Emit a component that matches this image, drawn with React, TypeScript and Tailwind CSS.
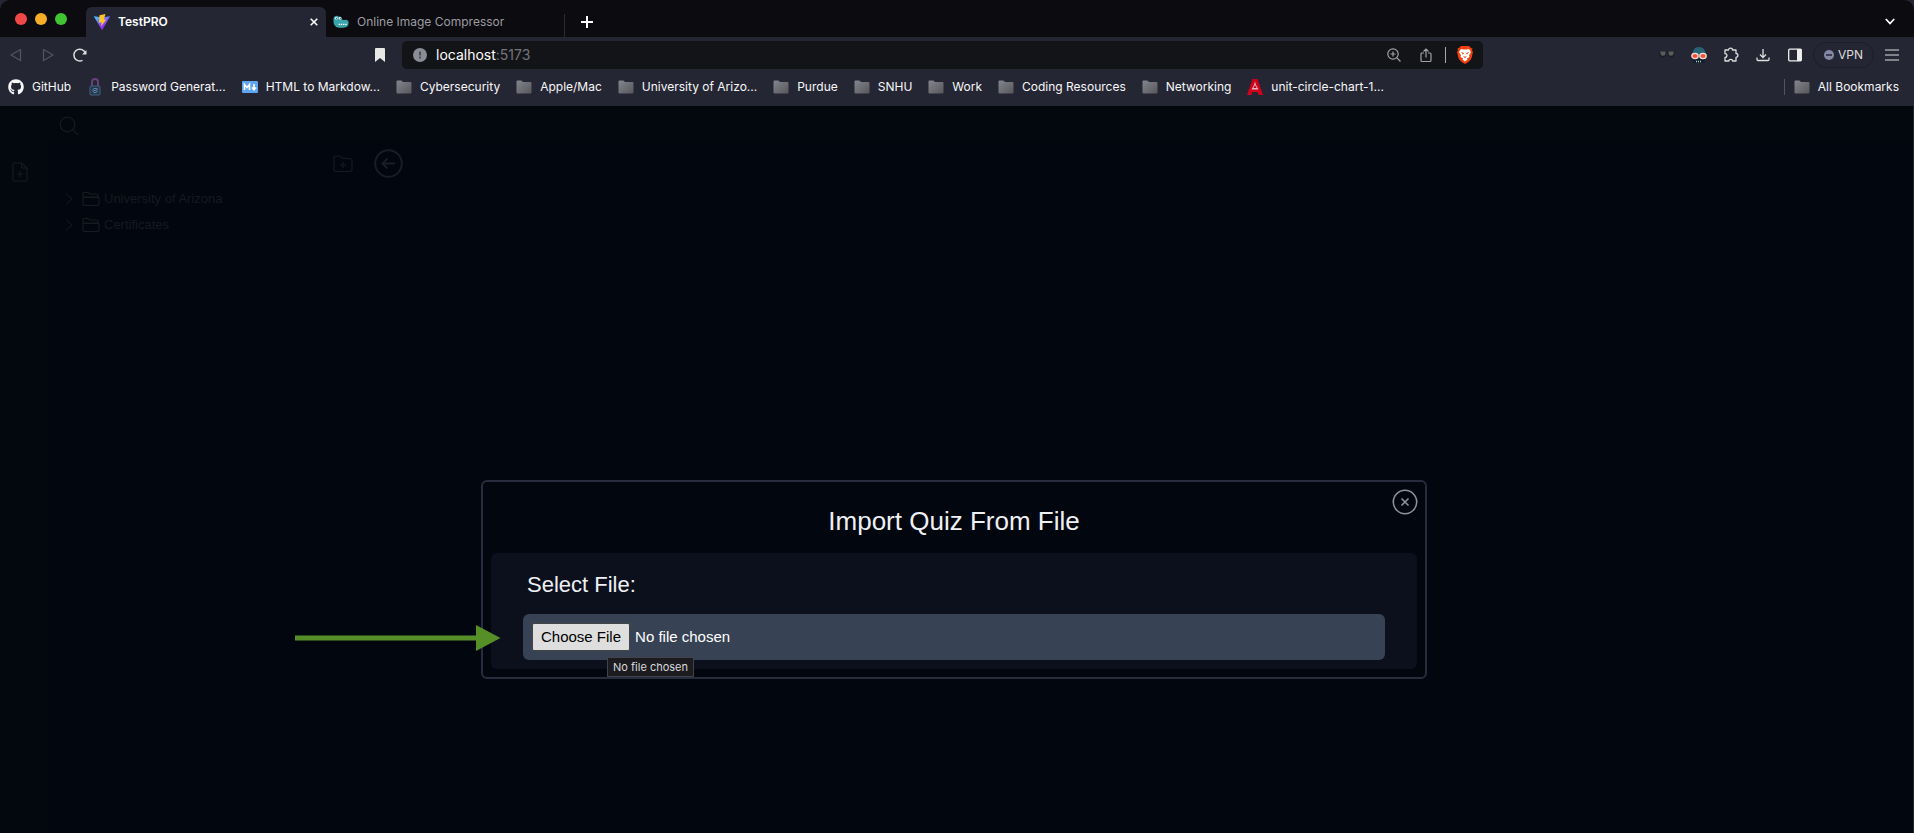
import React from "react";
import { FaGithub } from "react-icons/fa";

type Bookmark = { label: string; icon: React.ReactNode };

function FolderGlyph() {
  return (
    <svg width="16" height="14" viewBox="0 0 16 14" className="shrink-0" aria-hidden="true">
      <defs>
        <linearGradient id="folder" x1="0" y1="0" x2="1" y2="1">
          <stop offset="0" stopColor="#85868e" />
          <stop offset="1" stopColor="#56565b" />
        </linearGradient>
      </defs>
      <path d="M.5 1.500Q.5 .5 1.500 .5H5Q6 .5 6.500 1.500L7 2H14.500Q15.500 2 15.500 3V12.500Q15.500 13.500 14.500 13.500H1.500Q.5 13.500 .5 12.500Z" fill="url(#folder)" />
    </svg>
  );
}

function ViteLogo() {
  return (
    <svg width="16" height="16" viewBox="0 0 16 16" className="shrink-0" aria-hidden="true">
      <defs>
        <linearGradient id="vite" x1="0" y1="0" x2=".5" y2=".8">
          <stop offset="0" stopColor="#41d1ff" />
          <stop offset="1" stopColor="#9a2cf5" />
        </linearGradient>
      </defs>
      <path d="M.3 2.200L8 3.500L15.700 2.200Q16 2.500 15.700 3L8.500 15.600Q8 16 7.600 15.600L.2 3Q0 2.400 .3 2.200Z" fill="url(#vite)" />
      <path d="M11.500 0L5.500 1.200L5 8.500H7.700L7 12.500L12.200 5.500H9.800Z" fill="#ffc526" />
    </svg>
  );
}

function CrocLogo() {
  return (
    <svg width="16" height="14" viewBox="0 0 17 14" className="shrink-0" aria-hidden="true">
      <path d="M.5 5Q0 1 3 .5Q5.500 0 6 1.500Q9 0 9.500 4Q11 5.500 14 4.500Q17 5 16.500 8.500Q16.500 12.500 11 13H6Q0 12.500 .5 5Z" fill="#38a4ab" />
      <circle cx="3.500" cy="3" r="1.300" fill="#fff" /><circle cx="7.500" cy="3" r="1.300" fill="#fff" />
      <circle cx="3.700" cy="3" r=".6" fill="#111" /><circle cx="7.700" cy="3" r=".6" fill="#111" />
      <path d="M6 9.500H15" stroke="#fff" strokeWidth="1.500" strokeDasharray="1.500 .8" />
    </svg>
  );
}

function LockLogo() {
  return (
    <svg width="14" height="18" viewBox="0 0 14 18" className="shrink-0" fill="none" aria-hidden="true">
      <path d="M4 8V4Q4 1 7 1Q10 1 10 4V8" stroke="#67407c" strokeWidth="2" />
      <rect x="2" y="8" width="10" height="9" rx="1" fill="#263650" stroke="#41637b" />
      <circle cx="7" cy="12.500" r="2.200" stroke="#4c95a2" />
      <path d="M6 12L7 13L9.500 10" stroke="#8b6eb0" />
    </svg>
  );
}

function MarkdownLogo() {
  return (
    <svg width="16" height="12" viewBox="0 0 16 12" className="shrink-0" aria-hidden="true">
      <rect width="16" height="12" rx="1" fill="#60a5f2" />
      <path d="M2.500 9V3.500L5 6.500L7.500 3.500V9M12 3V8M10 6.500L12 8.800L14 6.500" fill="none" stroke="#fff" strokeWidth="1.600" />
    </svg>
  );
}

function AcademyLogo() {
  return (
    <svg width="16" height="16" viewBox="0 0 16 16" className="shrink-0" aria-hidden="true">
      <path d="M5.500 0H10.500L16 16H11.500L10.700 13H5.300L4.500 16H0Z" fill="#d0021b" />
      <path d="M8 2.500L9 6L11.500 10.500H4.500L7 6Z" fill="#e9b5bb" />
      <path d="M6.300 9L8 6L9.700 9Z" fill="#b00a20" />
    </svg>
  );
}

const bookmarks: Bookmark[] = [
  { label: "GitHub", icon: <FaGithub size={16} className="shrink-0" /> },
  { label: "Password Generat...", icon: <span className="flex w-4 justify-center"><LockLogo /></span> },
  { label: "HTML to Markdow...", icon: <MarkdownLogo /> },
  { label: "Cybersecurity", icon: <FolderGlyph /> },
  { label: "Apple/Mac", icon: <FolderGlyph /> },
  { label: "University of Arizo...", icon: <FolderGlyph /> },
  { label: "Purdue", icon: <FolderGlyph /> },
  { label: "SNHU", icon: <FolderGlyph /> },
  { label: "Work", icon: <FolderGlyph /> },
  { label: "Coding Resources", icon: <FolderGlyph /> },
  { label: "Networking", icon: <FolderGlyph /> },
  { label: "unit-circle-chart-1...", icon: <AcademyLogo /> },
];

function TabStrip() {
  return (
    <div className="flex h-[37px] items-end rounded-t-[10px] bg-[#0b0b10] pr-4">
      <div className="flex w-[86px] shrink-0 gap-2 self-center pl-[15px]">
        <button aria-label="Close window" className="size-3 rounded-full bg-[#f04747]" />
        <button aria-label="Minimize window" className="size-3 rounded-full bg-[#f5ae26]" />
        <button aria-label="Zoom window" className="size-3 rounded-full bg-[#41c334]" />
      </div>
      <div className="flex h-[30px] w-60 items-center gap-2 rounded-t-md bg-[#252633] px-2">
        <ViteLogo />
        <span className="flex-1 text-xs font-semibold text-white">TestPRO</span>
        <button aria-label="Close tab" className="text-white">
          <svg width="8" height="8" viewBox="0 0 8 8" stroke="currentColor" strokeWidth="1.600"><path d="M.7.7L7.300 7.300M7.300.7L.7 7.300" /></svg>
        </button>
      </div>
      <div className="flex h-[30px] w-[238px] items-center gap-2 px-[7px]">
        <CrocLogo />
        <span className="text-xs text-[#9d9da1]">Online Image Compressor</span>
      </div>
      <div className="h-[23px] w-px bg-[#2c2c30]" />
      <button aria-label="New tab" className="mb-[9px] ml-4 text-white">
        <svg width="12" height="12" viewBox="0 0 12 12" stroke="currentColor" strokeWidth="2"><path d="M6 0V12M0 6H12" /></svg>
      </button>
      <button aria-label="Search tabs" className="mb-3 ml-auto mr-[3px] text-white">
        <svg width="10" height="7" viewBox="0 0 10 7" fill="none" stroke="currentColor" strokeWidth="1.800"><path d="M.8 1L5 5.500L9.200 1" /></svg>
      </button>
    </div>
  );
}

function Toolbar() {
  return (
    <div className="flex h-9 items-center text-[#dededf]">
      <div className="flex w-[402px] shrink-0 items-center pl-[10px]">
        <button aria-label="Back" className="text-[#53545f]">
          <svg width="12" height="14" viewBox="0 0 12 14" fill="none" stroke="currentColor" strokeWidth="1.300" strokeLinejoin="round"><path d="M10.500 1.500V12.500L1 7Z" /></svg>
        </button>
        <button aria-label="Forward" className="ml-5 text-[#53545f]">
          <svg width="12" height="14" viewBox="0 0 12 14" fill="none" stroke="currentColor" strokeWidth="1.300" strokeLinejoin="round"><path d="M1.500 1.500V12.500L11 7Z" /></svg>
        </button>
        <button aria-label="Reload" className="ml-[18px]">
          <svg width="16" height="16" viewBox="0 0 16 16" fill="none" stroke="currentColor" strokeWidth="1.500"><path d="M10.500 13.300A5.900 5.900 0 1 1 13.300 6" /><path d="M14.500 3V7.500H10Z" fill="currentColor" stroke="none" /></svg>
        </button>
        <button aria-label="Bookmark this tab" className="ml-auto mr-[17px]">
          <svg width="10" height="14" viewBox="0 0 10 14" fill="#e8e8e6"><path d="M0 1Q0 0 1 0H9Q10 0 10 1V14L5 10L0 14Z" /></svg>
        </button>
      </div>
      <div className="flex h-7 min-w-0 flex-1 items-center rounded-[5px] bg-[#131418] pl-[11px] pr-[10px]">
        <svg width="14" height="14" viewBox="0 0 14 14" className="mr-[9px]" aria-hidden="true"><circle cx="7" cy="7" r="7" fill="#8a8d95" /><path d="M6 3.500H8V7.500H6ZM6 8.500H8V10.500H6Z" fill="#4b4e55" /></svg>
        <span className="flex-1 text-sm text-white">localhost<span className="text-[#73747a]">:5173</span></span>
        <button aria-label="Zoom" className="text-[#a0a1a5]">
          <svg width="14" height="14" viewBox="0 0 14 14" fill="none" stroke="currentColor" strokeWidth="1.200"><circle cx="6" cy="6" r="5.200" /><path d="M10 10L13.500 13.500M6 3.500V8.500M3.500 6H8.500" /></svg>
        </button>
        <button aria-label="Share" className="ml-[19px] text-[#a0a1a5]">
          <svg width="12" height="15" viewBox="0 0 12 15" fill="none" stroke="currentColor" strokeWidth="1.200"><path d="M4 5H2Q1 5 1 6V12.500Q1 13.500 2 13.500H10Q11 13.500 11 12.500V6Q11 5 10 5H8M6 9.500V1M3.500 3.500L6 1L8.500 3.500" /></svg>
        </button>
        <div className="ml-[13px] mr-[11px] h-4 w-px bg-[#a8a8aa]" />
        <button aria-label="Brave Shields">
          <svg width="16" height="18" viewBox="0 0 16 18"><path d="M4 0H12L14 2L15.500 2.500L15 4.500L16 6L14.500 12Q13.500 15 8 18Q2.500 15 1.500 12L0 6L1 4.500L.5 2.500L2 2Z" fill="#f4400e" /><path d="M4 3L6.500 3.500H9.500L12 3L14 6L12 9.500L12.500 11L10 12.500L10.500 13.500L8 15.500L5.500 13.500L6 12.500L3.500 11L4 9.500L2 6Z" fill="#fff" /><path d="M4 6L7 7L6 8.500ZM12 6L9 7L10 8.500ZM6 10.500H10L8 12Z" fill="#f4400e" /></svg>
        </button>
      </div>
      <div className="flex w-[431px] shrink-0 items-center justify-end gap-4 pr-[15px]">
        <button aria-label="Privacy glasses">
          <svg width="16" height="16" viewBox="0 0 16 16"><path d="M0 4H7L8 5L9 4H16L15 9Q12 12 9.500 9L9 6H7L6.500 9Q4 12 1 9Z" fill="#1b1c22" /><path d="M1 4.500H6.800L6 8Q4 9.500 2 8ZM9.200 4.500H15L14 8Q12 9.500 10 8Z" fill="#5c5c5c" /></svg>
        </button>
        <button aria-label="Robot extension">
          <svg width="16" height="16" viewBox="0 0 16 16"><path d="M1.500 8Q1.500 0 8 0Q14.500 0 14.500 8Z" fill="#286374" /><path d="M2 9H14V16H2Z" fill="#12202a" /><path d="M5 14.500H11" stroke="#b9cbd0" strokeWidth="1.500" strokeDasharray="1 1" /><ellipse cx="4" cy="9" rx="3.200" ry="2.600" fill="#ef5234" stroke="#f3dedb" strokeWidth="1.300" /><ellipse cx="12" cy="9" rx="3.200" ry="2.600" fill="#ef5234" stroke="#f3dedb" strokeWidth="1.300" /></svg>
        </button>
        <button aria-label="Extensions">
          <svg width="16" height="16" viewBox="0 0 16 16" fill="none" stroke="currentColor" strokeWidth="1.300" strokeLinejoin="round"><path d="M2 3H5.500A2 1.800 0 0 1 9.500 3H13V6.500A1.800 1.800 0 0 1 13 10.300V14H9.600A1.900 1.700 0 0 0 5.800 14H2V10.500A1.900 1.900 0 0 0 2 6.700Z" /></svg>
        </button>
        <button aria-label="Downloads">
          <svg width="16" height="16" viewBox="0 0 16 16" fill="none" stroke="currentColor" strokeWidth="1.300"><path d="M8 2V10M5 7.500L8 10.500L11 7.500M2 10.500V12.500Q2 13.500 3 13.500H13Q14 13.500 14 12.500V10.500" /></svg>
        </button>
        <button aria-label="Sidebar">
          <svg width="16" height="16" viewBox="0 0 16 16" fill="none" stroke="#eeeeec" strokeWidth="1.300"><rect x="1.700" y="2.200" width="12.600" height="11.600" rx="1" /><path d="M10 2H14.500V14H10Z" fill="#eeeeec" stroke="none" /></svg>
        </button>
        <button className="-ml-[6px] flex h-[26px] items-center gap-1 rounded-full border border-[#1c1d27] px-[10px] text-xs">
          <svg width="10" height="10" viewBox="0 0 10 10" aria-hidden="true"><circle cx="5" cy="5" r="5" fill="#8588a5" /><path d="M2 5H8" stroke="#252633" strokeWidth="1.500" /></svg>
          VPN
        </button>
        <button aria-label="Menu" className="-ml-[5px]">
          <svg width="14" height="12" viewBox="0 0 14 12" stroke="currentColor" strokeWidth="1.200"><path d="M0 1H14M0 6H14M0 11H14" /></svg>
        </button>
      </div>
    </div>
  );
}

function BookmarksBar() {
  return (
    <nav aria-label="Bookmarks" className="flex h-[33px] items-center gap-4 whitespace-nowrap pb-[6px] pl-2 pr-[15px] text-xs text-[#f8f8f9]">
      {bookmarks.map((b) => (
        <a key={b.label} href="#" className="flex items-center gap-2">
          {b.icon}
          {b.label}
        </a>
      ))}
      <div className="ml-auto flex items-center gap-[9px]">
        <div className="h-4 w-px bg-[#54555e]" />
        <a href="#" className="flex items-center gap-2"><FolderGlyph />All Bookmarks</a>
      </div>
    </nav>
  );
}

function TreeItem({ label }: { label: string }) {
  return (
    <li>
      <button className="flex h-[26px] items-center text-[13px]">
        <svg width="8" height="12" viewBox="0 0 8 12" fill="none" stroke="currentColor"><path d="M1 .5L7 6L1 11.500" /></svg>
        <svg width="18" height="16" viewBox="0 0 18 16" className="ml-[9px] mr-1" fill="none" stroke="currentColor" strokeWidth="1.200"><path d="M1 6V2.500Q1 1.500 2.500 1.500H6L8 3H14.500Q16 3 16 4.500V6M1 7V12.500Q1 14.500 3 14.500H15Q17 14.500 17 12.500V7Q17 6 16 6H2Q1 6 1 7ZM1 6.500H17" /></svg>
        {label}
      </button>
    </li>
  );
}

function ImportDialog() {
  return (
    <div role="dialog" aria-labelledby="dialog-title" className="relative w-[946px] max-w-full rounded-md border-2 border-[#272d3e] bg-[#02060f] p-2">
      <button aria-label="Close" className="absolute right-[7px] top-[7px] text-[#8d929f]">
        <svg width="26" height="26" viewBox="0 0 26 26" fill="none" stroke="currentColor" strokeWidth="1.600"><circle cx="13" cy="13" r="11.700" /><path d="M9.500 9.500L16.500 16.500M16.500 9.500L9.500 16.500" /></svg>
      </button>
      <h1 id="dialog-title" className="flex h-[63px] items-center justify-center text-[26px] text-[#eef0f4]">Import Quiz From File</h1>
      <div className="rounded-md bg-[#0c0f1c] px-8 pb-[9px] pt-3">
        <label htmlFor="quiz-file" className="ml-1 flex h-[38px] items-center text-[22px] text-[#eef0f4]">Select File:</label>
        <input
          id="quiz-file"
          type="file"
          className="mt-[11px] block h-[46px] w-full rounded-md bg-[#374254] p-[9px] text-[15px] text-white file:mr-[5px] file:h-7 file:rounded-[2px] file:border file:border-solid file:border-[#444] file:bg-[#dedede] file:px-2 file:text-[15px] file:text-black"
        />
      </div>
      <div role="tooltip" className="absolute left-[124px] top-[175px] flex h-5 items-center border border-[#424247] bg-[#1c1b20] px-[5px] font-[Inter,sans-serif] text-[11px] text-[#d9d9dc]">No file chosen</div>
      <svg width="206" height="26" viewBox="0 0 206 26" className="absolute -left-[188px] top-[143px]" aria-hidden="true"><path d="M0 10.500H181V0L205.500 13L181 26V15.500H0Z" fill="#568f28" /></svg>
    </div>
  );
}

export default function App() {
  return (
    <div className="flex min-h-screen flex-col bg-[#03080f] font-['Liberation_Sans',sans-serif]">
      <header className="bg-[#252633] font-[Inter,sans-serif]">
        <TabStrip />
        <Toolbar />
        <BookmarksBar />
      </header>
      <main className="relative flex flex-1 flex-col border-r border-[#23262c] text-[#161a21]">
        <div className="absolute inset-0 flex">
          <aside className="w-[47px] pl-3 pt-14">
            <button aria-label="New file">
              <svg width="16" height="20" viewBox="0 0 16 20" fill="none" stroke="currentColor" strokeWidth="1.200"><path d="M1 2.500Q1 1 2.500 1H9.500L15 6V17.500Q15 19 13.500 19H2.500Q1 19 1 17.500ZM9.500 1V5Q9.500 6 10.500 6H15M8 9V15M5 12H11" /></svg>
            </button>
          </aside>
          <div className="flex flex-1 flex-col">
            <div className="flex h-[35px] items-center pl-3 pt-1">
              <button aria-label="Search">
                <svg width="20" height="20" viewBox="0 0 20 20" fill="none" stroke="currentColor" strokeWidth="1.200"><circle cx="8.500" cy="8.500" r="7.300" /><path d="M13.700 13.700L19 19" /></svg>
              </button>
            </div>
            <div className="flex-1 bg-[#02060f]">
              <div className="flex h-[45px] w-[356px] items-center justify-end gap-[21px]">
                <button aria-label="New folder">
                  <svg width="20" height="18" viewBox="0 0 20 18" fill="none" stroke="currentColor" strokeWidth="1.200"><path d="M1 3Q1 1 3 1H7L9.500 3.500H17Q19 3.500 19 5.500V14.500Q19 16.500 17 16.500H3Q1 16.500 1 14.500ZM10 7V13M7 10H13" /></svg>
                </button>
                <button aria-label="Back to list" className="text-[#1a1d26]">
                  <svg width="29" height="29" viewBox="0 0 29 29" fill="none" stroke="currentColor" strokeWidth="2"><circle cx="14.500" cy="14.500" r="13.300" /><path d="M21 14.500H8.500M13.500 9.500L8.500 14.500L13.500 19.500" /></svg>
                </button>
              </div>
              <ul className="pl-[18px]">
                <TreeItem label="University of Arizona" />
                <TreeItem label="Certificates" />
              </ul>
            </div>
          </div>
        </div>
        <div className="flex justify-center pr-[5px] pt-[374px]">
          <ImportDialog />
        </div>
      </main>
    </div>
  );
}
